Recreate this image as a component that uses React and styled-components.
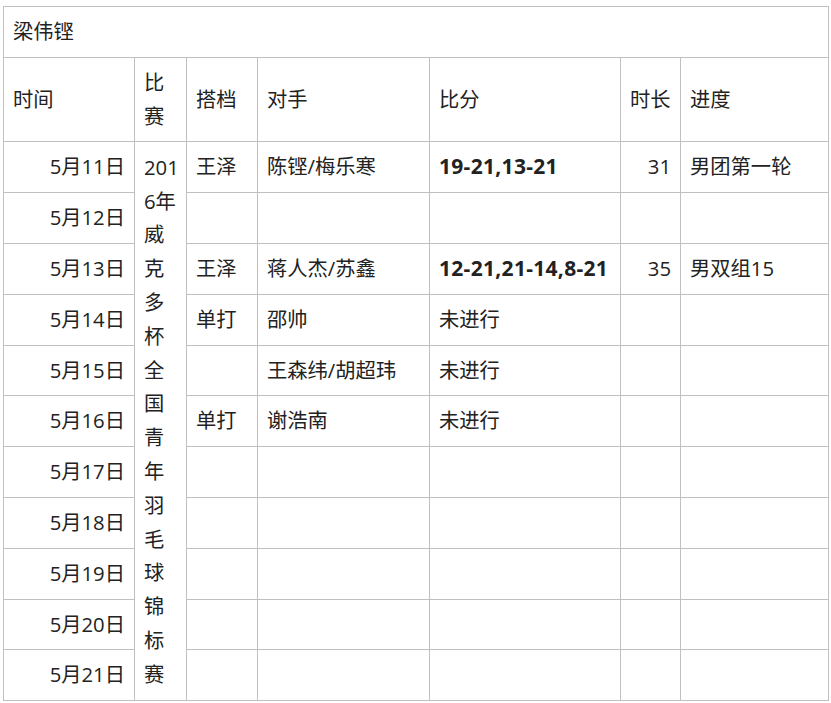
import React from "react";
import styled, { createGlobalStyle } from "styled-components";

const Global = createGlobalStyle`
  html, body { margin: 0; padding: 0; background: #fff; }
  body { font-family: "Open Sans", "Noto Sans CJK SC", sans-serif; color: #222; }
`;

const Page = styled.div`
  padding: 6px 0 0 3px;
`;

const Table = styled.table`
  width: 825px;
  border-collapse: collapse;
  table-layout: fixed;
  font-size: 20.3px;
  line-height: 33.8px;
`;

const Cell = styled.td`
  border: 1px solid #c0c0c0;
  padding: 8px 9px;
  vertical-align: middle;
  text-align: ${(p) => p.$align || "left"};
  font-weight: ${(p) => (p.$bold ? 700 : 400)};
  font-size: ${(p) => (p.$bold ? "21px" : "inherit")};
  letter-spacing: ${(p) => (p.$bold ? "0.3px" : "normal")};
  white-space: ${(p) => (p.$nowrap ? "nowrap" : "normal")};
`;

const HeadCell = styled.th`
  border: 1px solid #c0c0c0;
  padding: 8px 8px 8px 9px;
  vertical-align: middle;
  text-align: left;
  font-weight: 400;
`;

const EventCell = styled.td`
  border: 1px solid #c0c0c0;
  padding: 8px 4px 8px 9px;
  vertical-align: middle;
  text-align: left;
  word-break: break-all;
`;

const widths = [131, 52, 71, 172, 191, 60, 148];

const rows = [
  ["5月11日", "王泽", "陈铿/梅乐寒", "19-21,13-21", "31", "男团第一轮"],
  ["5月12日", "", "", "", "", ""],
  ["5月13日", "王泽", "蒋人杰/苏鑫", "12-21,21-14,8-21", "35", "男双组15"],
  ["5月14日", "单打", "邵帅", "未进行", "", ""],
  ["5月15日", "", "王森纬/胡超玮", "未进行", "", ""],
  ["5月16日", "单打", "谢浩南", "未进行", "", ""],
  ["5月17日", "", "", "", "", ""],
  ["5月18日", "", "", "", "", ""],
  ["5月19日", "", "", "", "", ""],
  ["5月20日", "", "", "", "", ""],
  ["5月21日", "", "", "", "", ""],
];

export default function App() {
  return (
    <Page>
      <Global />
      <Table>
        <colgroup>
          {widths.map((w, i) => (
            <col key={i} style={{ width: w }} />
          ))}
        </colgroup>
        <tbody>
          <tr>
            <Cell colSpan={7}>梁伟铿</Cell>
          </tr>
          <tr>
            <HeadCell>时间</HeadCell>
            <HeadCell>比赛</HeadCell>
            <HeadCell>搭档</HeadCell>
            <HeadCell>对手</HeadCell>
            <HeadCell>比分</HeadCell>
            <HeadCell>时长</HeadCell>
            <HeadCell>进度</HeadCell>
          </tr>
          {rows.map((r, i) => (
            <tr key={r[0]}>
              <Cell $align="right">{r[0]}</Cell>
              {i === 0 && (
                <EventCell rowSpan={rows.length}>2016年威克多杯全国青年羽毛球锦标赛</EventCell>
              )}
              <Cell>{r[1]}</Cell>
              <Cell>{r[2]}</Cell>
              <Cell $bold={/\d/.test(r[3])} $nowrap>{r[3]}</Cell>
              <Cell $align="right">{r[4]}</Cell>
              <Cell>{r[5]}</Cell>
            </tr>
          ))}
        </tbody>
      </Table>
    </Page>
  );
}
